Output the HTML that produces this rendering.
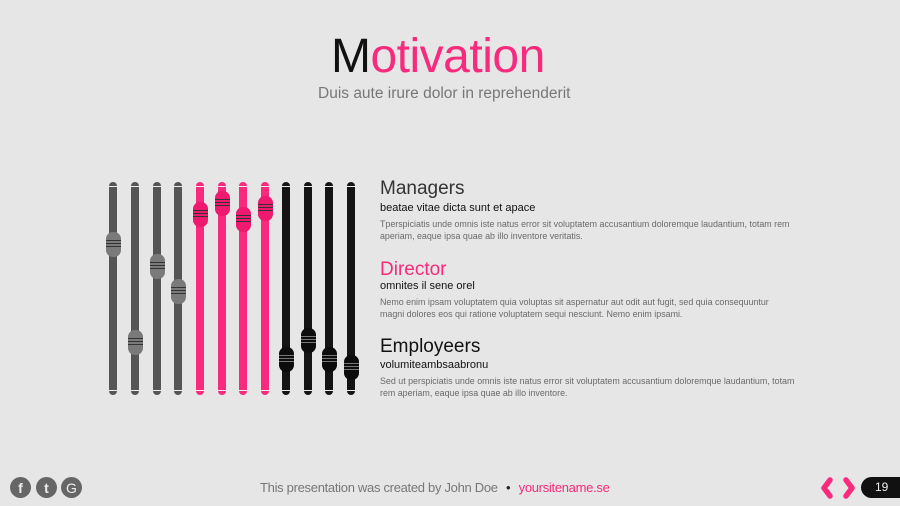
<!DOCTYPE html>
<html><head><meta charset="utf-8"><style>
body{margin:0;width:900px;height:506px;background:#e6e6e6;overflow:hidden;position:relative;font-family:"Liberation Sans",sans-serif}
.a{position:absolute;white-space:nowrap}
.bar{position:absolute;top:182px;height:213px;width:8px;border-radius:4px}
.bar:before,.bar:after{content:"";position:absolute;left:0;right:0;height:1px;background:#eee}
.bar:before{top:4px}.bar:after{bottom:4px}
.k{position:absolute;width:15px;height:25px;border-radius:7px;left:-3.5px;background:repeating-linear-gradient(#333 0 1px,transparent 1px 3px) center/100% 9px no-repeat}
.g{background-color:#555}.g .k{background-color:#7a7a7a}
.p{background-color:#f72a7d}.p .k{background-color:#ef1a6f}
.b{background-color:#141414}.b .k{background-color:#0c0c0c;background-image:repeating-linear-gradient(#777 0 1px,transparent 1px 3px)}
.h{font-size:19px;color:#222}
.s{font-size:11px;color:#111}
.t{font-size:8.9px;color:#6a6a6a;line-height:12px;white-space:normal;width:415px}
.ic{position:absolute;top:477px;width:21px;height:21px;border-radius:50%;background:#666;color:#eee;font-weight:bold;font-size:14px;text-align:center;line-height:22px}
</style></head><body>
<div class="a" style="left:331px;top:29px;font-size:48px;letter-spacing:-0.5px;color:#f72a7d"><span style="color:#111">M</span>otivation</div>
<div class="a" style="left:318px;top:85px;font-size:15.5px;color:#777">Duis aute irure dolor in reprehenderit</div>

<div class="bar g" style="left:109px"><div class="k" style="top:50px"></div></div>
<div class="bar g" style="left:131px"><div class="k" style="top:148px"></div></div>
<div class="bar g" style="left:153px"><div class="k" style="top:72px"></div></div>
<div class="bar g" style="left:174px"><div class="k" style="top:97px"></div></div>
<div class="bar p" style="left:196px"><div class="k" style="top:20px"></div></div>
<div class="bar p" style="left:218px"><div class="k" style="top:9px"></div></div>
<div class="bar p" style="left:239px"><div class="k" style="top:25px"></div></div>
<div class="bar p" style="left:261px"><div class="k" style="top:14px"></div></div>
<div class="bar b" style="left:282px"><div class="k" style="top:165px"></div></div>
<div class="bar b" style="left:304px"><div class="k" style="top:146px"></div></div>
<div class="bar b" style="left:325px"><div class="k" style="top:165px"></div></div>
<div class="bar b" style="left:347px"><div class="k" style="top:173px"></div></div>

<div class="a h" style="left:380px;top:178px;color:#333">Managers</div>
<div class="a s" style="left:380px;top:202px">beatae vitae dicta sunt et apace</div>
<div class="a t" style="left:380px;top:218px">Tperspiciatis unde omnis iste natus error sit voluptatem accusantium doloremque laudantium, totam rem aperiam, eaque ipsa quae ab illo inventore veritatis.</div>
<div class="a h" style="left:380px;top:259px;color:#f72a7d">Director</div>
<div class="a s" style="left:380px;top:280px">omnites il sene orel</div>
<div class="a t" style="left:380px;top:296px">Nemo enim ipsam voluptatem quia voluptas sit aspernatur aut odit aut fugit, sed quia consequuntur magni dolores eos qui ratione voluptatem sequi nesciunt. Nemo enim ipsami.</div>
<div class="a h" style="left:380px;top:336px;color:#111">Employeers</div>
<div class="a s" style="left:380px;top:359px">volumiteambsaabronu</div>
<div class="a t" style="left:380px;top:375px">Sed ut perspiciatis unde omnis iste natus error sit voluptatem accusantium doloremque laudantium, totam rem aperiam, eaque ipsa quae ab illo inventore.</div>

<div class="ic" style="left:10px">f</div>
<div class="ic" style="left:36px">t</div>
<div class="ic" style="left:61px;font-weight:normal">G</div>
<div class="a" style="left:260px;top:480px;font-size:13px;color:#777;letter-spacing:-0.3px">This presentation was created by John Doe <span style="color:#222;margin:0 5px">•</span> <span style="color:#f72a7d">yoursitename.se</span></div>
<svg class="a" style="left:818px;top:476px" width="40" height="24"><path d="M12 4 L6 12 L12 20 M28 4 L34 12 L28 20" fill="none" stroke="#f72a7d" stroke-width="5.5" stroke-linejoin="round" stroke-linecap="round"/></svg>
<div class="a" style="left:861px;top:477px;width:50px;height:21px;border-radius:11px;background:#111;color:#eee;font-size:12px;line-height:21px;padding-left:14px;box-sizing:border-box">19</div>
</body></html>
